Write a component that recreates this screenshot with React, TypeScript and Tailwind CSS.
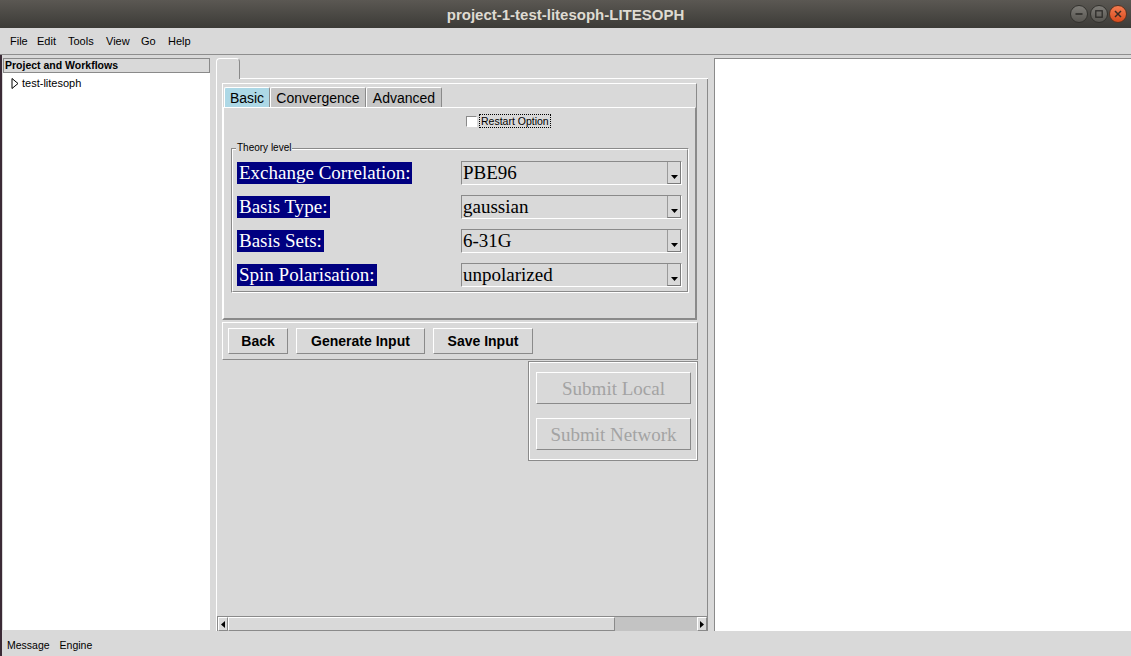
import React from "react";

const raised = "border border-t-white border-l-white border-b-[#8a8a8a] border-r-[#8a8a8a]";
const sunken = "border border-t-[#8a8a8a] border-l-[#8a8a8a] border-b-white border-r-white";
const serif = "font-['Liberation_Serif','Times_New_Roman',serif]";

function WinButton({ kind }: { kind: "min" | "max" | "close" }) {
  const bg =
    kind === "close"
      ? "bg-linear-to-b from-[#f47c50] to-[#d8491a] border-[#5a3320]"
      : "bg-linear-to-b from-[#7e7c77] to-[#585651] border-[#33322e]";
  return (
    <div className={`w-[18px] h-[18px] rounded-full border flex items-center justify-center ${bg}`}>
      <svg width="10" height="10" viewBox="0 0 10 10">
        {kind === "min" && <line x1="1.5" y1="5" x2="8.5" y2="5" stroke="#2d2c29" strokeWidth="1.6" />}
        {kind === "max" && <rect x="1.8" y="1.8" width="6.4" height="6.4" fill="none" stroke="#2d2c29" strokeWidth="1.3" />}
        {kind === "close" && (
          <g stroke="#3a2a22" strokeWidth="1.5">
            <line x1="2" y1="2" x2="8" y2="8" />
            <line x1="8" y1="2" x2="2" y2="8" />
          </g>
        )}
      </svg>
    </div>
  );
}

function Btn({ w, children }: { w: string; children: React.ReactNode }) {
  return (
    <div className={`${w} h-[26px] ${raised} flex items-center justify-center text-[14px] font-bold leading-none`}>
      {children}
    </div>
  );
}

function SubmitBtn({ children }: { children: React.ReactNode }) {
  return (
    <div className={`w-[155px] h-[32px] ${raised} flex items-center justify-center ${serif} text-[19px] text-[#a3a3a3] leading-none`}>
      {children}
    </div>
  );
}

function Row({ label, value }: { label: string; value: string }) {
  return (
    <>
      <div className="h-[24px] flex items-center">
        <span className={`bg-[#000080] text-white h-[22px] leading-[22px] px-[2px] ${serif} text-[19px] whitespace-nowrap`}>
          {label}
        </span>
      </div>
      <div className={`h-[24px] flex ${sunken}`}>
        <div className={`flex-1 pl-[1px] ${serif} text-[19px] leading-[22px] whitespace-nowrap`}>{value}</div>
        <div className="w-[14px] flex items-end justify-center pb-[3px] border-l border-l-[#9a9a9a] border-r border-r-[#7a7a7a] border-b border-b-[#7a7a7a]">
          <svg width="7" height="5" viewBox="0 0 7 5">
            <path d="M0 0 H7 L3.5 4 Z" fill="black" />
          </svg>
        </div>
      </div>
    </>
  );
}

function ArrowBtn({ dir }: { dir: "left" | "right" }) {
  return (
    <div className={`w-[10px] h-full ${raised} flex items-center justify-center`}>
      <svg width="4" height="7" viewBox="0 0 4 7">
        {dir === "left" ? <path d="M4 0 V7 L0 3.5 Z" fill="black" /> : <path d="M0 0 V7 L4 3.5 Z" fill="black" />}
      </svg>
    </div>
  );
}

function Tab({ w, active, children }: { w: string; active?: boolean; children: React.ReactNode }) {
  return (
    <div
      className={`${w} h-[20px] border-t border-l border-r border-t-white border-l-white border-r-[#8a8a8a] rounded-t-[2px] flex items-center justify-center text-[14px] leading-none ${
        active ? "bg-[#add8e6]" : "bg-[#c6c6c6]"
      }`}
    >
      {children}
    </div>
  );
}

export default function App() {
  return (
    <div className="w-[1131px] h-[656px] overflow-hidden flex flex-col bg-[#d9d9d9] font-['Liberation_Sans',Arial,sans-serif] text-black">
      {/* Title bar */}
      <div className="h-[28px] shrink-0 grid grid-cols-[1fr_auto_1fr] items-center bg-linear-to-b from-[#5b5853] to-[#3c3b37]">
        <div />
        <div className="text-[15px] font-bold text-[#dfdbd2] leading-none">project-1-test-litesoph-LITESOPH</div>
        <div className="flex justify-end items-center gap-[1.5px] pr-[4px]">
          <WinButton kind="min" />
          <WinButton kind="max" />
          <WinButton kind="close" />
        </div>
      </div>

      {/* Menu bar */}
      <div className="h-[27px] shrink-0 flex items-center pl-[10px] text-[11px] border-b border-[#8e8e8e]">
        <span className="w-[27px]">File</span>
        <span className="w-[31px]">Edit</span>
        <span className="w-[38px]">Tools</span>
        <span className="w-[35px]">View</span>
        <span className="w-[27px]">Go</span>
        <span>Help</span>
      </div>

      {/* Body */}
      <div className="flex flex-1 min-h-0">
        <div className="w-[2px] bg-[#3b2a36]" />
        <div className="flex-1 flex flex-col">
          <div className="h-[576px] shrink-0 flex pt-[3px] pl-[1px]">
            {/* Left panel */}
            <div className="w-[207px] h-[572px] bg-white flex flex-col">
              <div className="h-[15px] bg-[#d9d9d9] border border-[#8a8a8a] text-[10.5px] font-bold leading-[13px] pl-[1px] whitespace-nowrap">
                Project and Workflows
              </div>
              <div className="h-[20px] flex items-center pl-[8px] gap-[3px] text-[11px]">
                <svg width="8" height="11" viewBox="0 0 8 11">
                  <path d="M1 0.5 L7 5.5 L1 10.5 Z" fill="none" stroke="black" strokeWidth="1" />
                </svg>
                <span>test-litesoph</span>
              </div>
            </div>

            {/* Middle notebook */}
            <div className="ml-[6px] w-[492px] h-full flex flex-col">
              <div className="h-[21px] flex">
                <div className="w-[24px] h-full border-l border-t border-r border-l-white border-t-white border-r-[#8a8a8a] rounded-t-[4px]" />
                <div className="flex-1 border-b border-white" />
              </div>
              <div className="flex-1 flex flex-col border-l border-l-white border-r border-r-[#8a8a8a]">
                <div className="flex-1 flex flex-col pl-[5px] pr-[9px] pt-[4px]">
                  {/* Inner notebook */}
                  <div className={`w-[475px] ${raised} pt-[3px] flex flex-col`}>
                    <div className="flex pl-[1px] h-[20px]">
                      <Tab w="w-[46px]" active>
                        Basic
                      </Tab>
                      <Tab w="w-[96px]">Convergence</Tab>
                      <Tab w="w-[76px]">Advanced</Tab>
                    </div>
                    <div className={`h-[212px] ${raised} flex flex-col`}>
                      <div className="mt-[6px] h-[14px] flex items-center pl-[242px]">
                        <div className={`w-[11px] h-[11px] bg-white ${sunken}`} />
                        <span className="ml-[2px] border border-dotted border-black px-[1px] text-[10.5px] leading-[12px] whitespace-nowrap">
                          Restart Option
                        </span>
                      </div>
                      <div className={`relative mt-[20px] ml-[7px] mr-[6px] ${sunken}`}>
                        <span className="absolute -top-[7px] left-[4px] bg-[#d9d9d9] px-[1px] text-[10px] leading-[12px]">
                          Theory level
                        </span>
                        <div className={`${raised} pt-[11px] pb-[4px] pl-[4px] pr-[4px] grid grid-cols-[224px_221px] gap-y-[10px]`}>
                          <Row label="Exchange Correlation:" value="PBE96" />
                          <Row label="Basis Type:" value="gaussian" />
                          <Row label="Basis Sets:" value="6-31G" />
                          <Row label="Spin Polarisation:" value="unpolarized" />
                        </div>
                      </div>
                    </div>
                  </div>

                  {/* Button bar */}
                  <div className={`mt-[2px] h-[38px] ${raised} flex items-start gap-[8px] pl-[5px] pt-[5px]`}>
                    <Btn w="w-[60px]">Back</Btn>
                    <Btn w="w-[129px]">Generate Input</Btn>
                    <Btn w="w-[100px]">Save Input</Btn>
                  </div>

                  {/* Submit frame */}
                  <div className="mt-[1px] self-end w-[170px] h-[100px] border border-[#8a8a8a]">
                    <div className="h-full border border-white flex flex-col pl-[6px] pt-[9px] gap-[14px]">
                      <SubmitBtn>Submit Local</SubmitBtn>
                      <SubmitBtn>Submit Network</SubmitBtn>
                    </div>
                  </div>
                </div>

                {/* Scrollbar */}
                <div className="h-[15px] shrink-0 flex border-t border-[#8a8a8a]">
                  <div className="w-[1px] bg-[#8a8a8a]" />
                  <ArrowBtn dir="left" />
                  <div className={`w-[387px] h-full ${raised} bg-[#d9d9d9]`} />
                  <div className="flex-1 bg-[#c3c3c3]" />
                  <ArrowBtn dir="right" />
                </div>
              </div>
            </div>

            {/* Right panel */}
            <div className="ml-[6px] flex-1 h-full bg-white border-t border-l border-[#8a8a8a]" />
          </div>

          {/* Status bar */}
          <div className="flex-1 flex items-center gap-[10px] pl-[5px] pt-[5px] text-[10.5px]">
            <span>Message</span>
            <span>Engine</span>
          </div>
        </div>
      </div>
    </div>
  );
}
